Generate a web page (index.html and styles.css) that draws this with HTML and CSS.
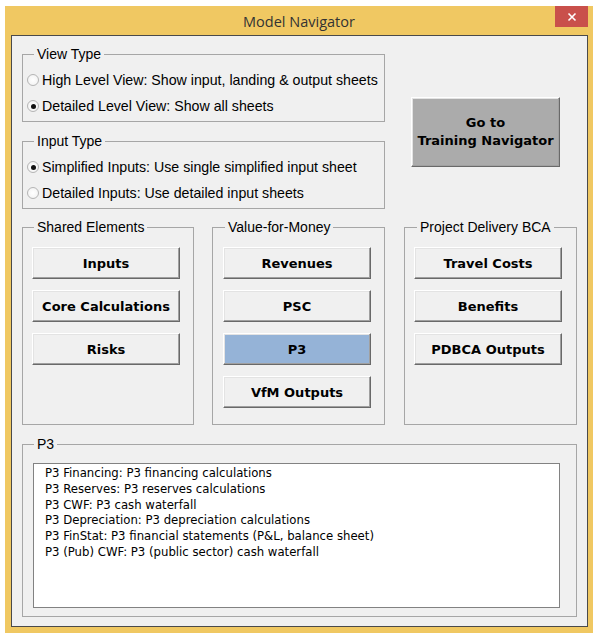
FILE: index.html
```html
<!DOCTYPE html>
<html>
<head>
<meta charset="utf-8">
<title>Model Navigator</title>
<link rel="stylesheet" href="styles.css">
</head>
<body>
<div class="window">
  <div class="titlebar">
    <span class="title">Model Navigator</span>
    <span class="close"><svg width="10" height="10" viewBox="0 0 10 10"><path d="M1.5 1.5 L8.5 8.5 M8.5 1.5 L1.5 8.5" stroke="#fff" stroke-width="1.6"/></svg></span>
  </div>
  <div class="client">
    <div class="top-row">
      <div class="options">
        <fieldset class="group view-type">
          <legend>View Type</legend>
          <div class="radio"><span class="circle"></span><span class="rlabel">High Level View: Show input, landing &amp; output sheets</span></div>
          <div class="radio"><span class="circle checked"></span><span class="rlabel">Detailed Level View: Show all sheets</span></div>
        </fieldset>
        <fieldset class="group input-type">
          <legend>Input Type</legend>
          <div class="radio"><span class="circle checked"></span><span class="rlabel">Simplified Inputs: Use single simplified input sheet</span></div>
          <div class="radio"><span class="circle"></span><span class="rlabel">Detailed Inputs: Use detailed input sheets</span></div>
        </fieldset>
      </div>
      <div class="btn btn-go">Go to<br>Training Navigator</div>
    </div>
    <div class="sections">
      <fieldset class="group section sec-shared">
        <legend>Shared Elements</legend>
        <div class="btn">Inputs</div>
        <div class="btn">Core Calculations</div>
        <div class="btn">Risks</div>
      </fieldset>
      <fieldset class="group section sec-vfm">
        <legend>Value-for-Money</legend>
        <div class="btn">Revenues</div>
        <div class="btn">PSC</div>
        <div class="btn btn-active">P3</div>
        <div class="btn">VfM Outputs</div>
      </fieldset>
      <fieldset class="group section sec-pdbca">
        <legend>Project Delivery BCA</legend>
        <div class="btn">Travel Costs</div>
        <div class="btn">Benefits</div>
        <div class="btn">PDBCA Outputs</div>
      </fieldset>
    </div>
    <fieldset class="group p3">
      <legend>P3</legend>
      <div class="listbox">
        <div class="item">P3 Financing: P3 financing calculations</div>
        <div class="item">P3 Reserves: P3 reserves calculations</div>
        <div class="item">P3 CWF: P3 cash waterfall</div>
        <div class="item">P3 Depreciation: P3 depreciation calculations</div>
        <div class="item">P3 FinStat: P3 financial statements (P&amp;L, balance sheet)</div>
        <div class="item">P3 (Pub) CWF: P3 (public sector) cash waterfall</div>
      </div>
    </fieldset>
  </div>
</div>
</body>
</html>
```
FILE: styles.css
```css
* { box-sizing: border-box; }
html, body { margin: 0; padding: 0; background: #ffffff; }
body { width: 602px; height: 638px; overflow: hidden; }

.window {
  margin: 6px 0 0 5px;
  width: 588px;
  height: 627px;
  background: #f0c862;
  padding: 0 5px 6px 6px;
  display: flex;
  flex-direction: column;
}

.titlebar {
  position: relative;
  height: 29px;
  flex: none;
  text-align: center;
  padding-top: 6px;
  margin-left: -6px;
  margin-right: -5px;
}
.title {
  font-family: "Open Sans", "Noto Sans", sans-serif;
  font-size: 14.5px;
  line-height: 20px;
  color: #333333;
}
.close {
  position: absolute;
  top: 0;
  right: 5px;
  width: 33px;
  height: 21px;
  background: #c9504b;
  display: flex;
  align-items: center;
  justify-content: center;
}

.client {
  width: 577px;
  height: 592px;
  border: 1px solid #4a4a4a;
  background: #f0f0f0;
  padding: 10px 0 0 10px;
  font-family: "Liberation Sans", Arial, sans-serif;
  font-size: 14px;
  color: #000;
}

.group {
  margin: 0;
  border: 1px solid #a6a6a6;
  min-inline-size: 0;
}
.group legend {
  padding: 0 3px;
  line-height: 16px;
  font-size: 14px;
}

.top-row {
  display: flex;
  align-items: flex-start;
}
.options { width: 363px; }
.view-type, .input-type {
  width: 363px;
  padding: 9px 0 6px 4px;
}
.view-type legend, .input-type legend { margin-left: 7px; }
.input-type { margin-top: 11px; }

.radio {
  display: flex;
  align-items: center;
  height: 18px;
}
.radio + .radio { margin-top: 8px; }
.circle {
  width: 12px;
  height: 12px;
  border-radius: 50%;
  border: 1px solid #b5b5b5;
  background: radial-gradient(circle at 50% 50%, #ffffff 0%, #f6f6f6 60%, #e6e6e6 100%);
  margin-right: 3px;
  display: flex;
  align-items: center;
  justify-content: center;
  flex: none;
}
.circle.checked::after {
  content: "";
  width: 5px;
  height: 5px;
  border-radius: 50%;
  background: #111;
}
.rlabel { line-height: 18px; white-space: nowrap; font-size: 14.2px; }

.btn {
  font-family: "DejaVu Sans", sans-serif;
  font-weight: bold;
  font-size: 13px;
  color: #000;
  background: #f0f0f0;
  border-top: 1px solid #ffffff;
  border-left: 1px solid #ffffff;
  border-right: 1px solid #696969;
  border-bottom: 1px solid #696969;
  box-shadow: inset -1px -1px 0 #a0a0a0, inset 1px 1px 0 #e3e3e3;
  width: 148px;
  height: 32px;
  display: flex;
  align-items: center;
  justify-content: center;
  text-align: center;
}
.btn + .btn { margin-top: 11px; }
.btn-active { background: #95b3d7; }

.btn-go {
  width: 149px;
  height: 70px;
  margin-left: 26px;
  margin-top: 51px;
  background: #ababab;
  line-height: 18px;
  flex: none;
}

.sections {
  display: flex;
  margin-top: 10px;
}
.section {
  height: 206px;
  padding: 12px 0 0 9px;
}
.section legend { margin-left: 2px; }
.sec-shared { width: 172px; }
.sec-vfm { width: 173px; margin-left: 18px; padding-left: 10px; }
.sec-vfm legend { margin-left: 2px; }
.sec-pdbca { width: 173px; margin-left: 19px; }
.sec-pdbca legend { margin-left: 3px; }

.p3 {
  width: 555px;
  margin-top: 11px;
  padding: 11px 0 8px 10px;
}
.p3 legend { margin-left: 1px; }
.listbox {
  width: 527px;
  height: 145px;
  background: #ffffff;
  border: 1px solid #828282;
  padding: 1px 0 0 11px;
  font-family: "DejaVu Sans Condensed", "DejaVu Sans", sans-serif;
  font-stretch: condensed;
  font-size: 13px;
  line-height: 15.8px;
  color: #000;
}
.item { white-space: nowrap; }
```
